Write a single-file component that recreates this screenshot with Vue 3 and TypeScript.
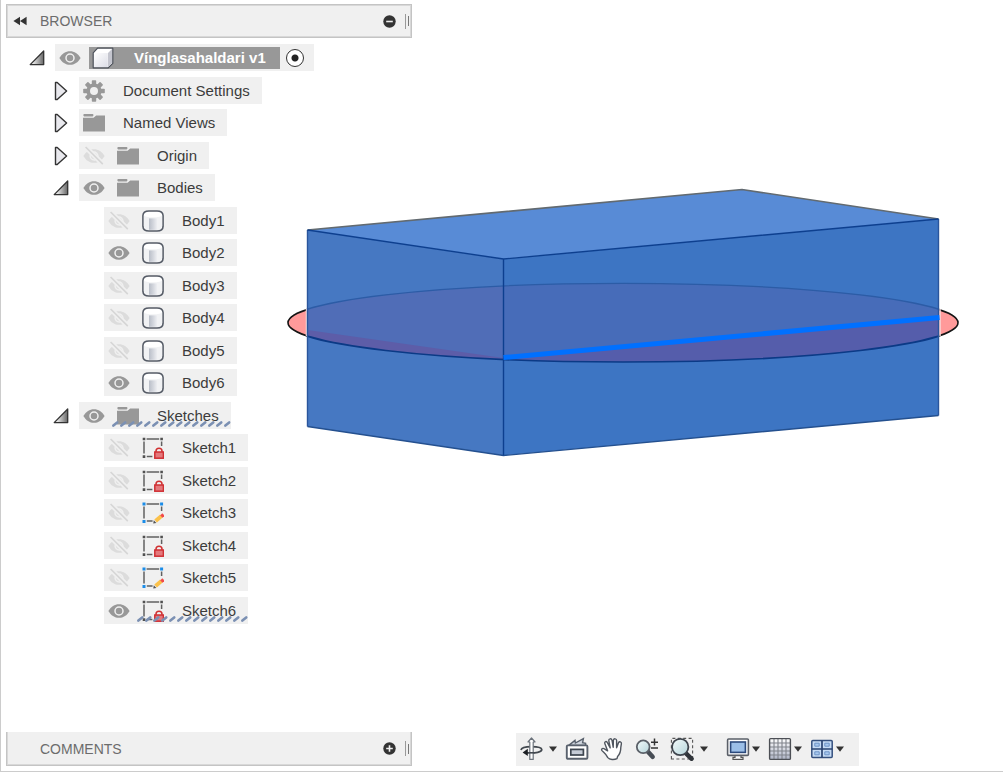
<script setup lang="ts">
import { computed, reactive, ref } from 'vue'

type Kind = 'cube' | 'gear' | 'folder' | 'body' | 'sketch-locked' | 'sketch-edit'

interface TreeNode {
  id: string
  name: string
  kind: Kind
  level: number
  parent?: string
  visible?: boolean
  expanded?: boolean
  marked?: boolean
}

const nodes = reactive<TreeNode[]>([
  { id: 'root', name: 'Vínglasahaldari v1', kind: 'cube', level: 0, visible: true, expanded: true },
  { id: 'settings', name: 'Document Settings', kind: 'gear', level: 1, parent: 'root', expanded: false },
  { id: 'views', name: 'Named Views', kind: 'folder', level: 1, parent: 'root', expanded: false },
  { id: 'origin', name: 'Origin', kind: 'folder', level: 1, parent: 'root', visible: false, expanded: false },
  { id: 'bodies', name: 'Bodies', kind: 'folder', level: 1, parent: 'root', visible: true, expanded: true },
  ...[1, 2, 3, 4, 5, 6].map((n): TreeNode => ({
    id: `body${n}`, name: `Body${n}`, kind: 'body', level: 2, parent: 'bodies', visible: n === 2 || n === 6,
  })),
  { id: 'sketches', name: 'Sketches', kind: 'folder', level: 1, parent: 'root', visible: true, expanded: true, marked: true },
  ...[1, 2, 3, 4, 5, 6].map((n): TreeNode => ({
    id: `sketch${n}`,
    name: `Sketch${n}`,
    kind: n === 3 || n === 5 ? 'sketch-edit' : 'sketch-locked',
    level: 2,
    parent: 'sketches',
    visible: n === 6,
    marked: n === 6,
  })),
])

const treeOpen = ref(true)

function isShown(node: TreeNode): boolean {
  if (!node.parent) return true
  const parent = nodes.find((n) => n.id === node.parent)
  return !!parent && !!parent.expanded && isShown(parent)
}

const rows = computed(() => nodes.filter(isShown))

const tools = [
  { id: 'orbit', label: 'Orbit', menu: true },
  { id: 'lookat', label: 'Look At', menu: false },
  { id: 'pan', label: 'Pan', menu: false },
  { id: 'zoom', label: 'Zoom', menu: false },
  { id: 'fit', label: 'Zoom Window', menu: true },
  { id: 'display', label: 'Display Settings', menu: true },
  { id: 'grid', label: 'Grid and Snaps', menu: true },
  { id: 'viewports', label: 'Viewports', menu: true },
]
</script>

<template>
  <main class="app">
    <svg class="defs" width="0" height="0" aria-hidden="true">
      <defs>
        <linearGradient id="g-tri" x1="0" y1="0" x2="1" y2="0">
          <stop offset="0.2" stop-color="#eee" /><stop offset="1" stop-color="#666" />
        </linearGradient>
        <linearGradient id="g-cyl" x1="0" y1="0" x2="1" y2="0">
          <stop offset="0" stop-color="#b9bec8" /><stop offset="0.5" stop-color="#d3d6dd" />
          <stop offset="1" stop-color="#f0f1f4" />
        </linearGradient>
        <linearGradient id="g-cube" x1="0" y1="0" x2="1" y2="1">
          <stop offset="0" stop-color="#fff" /><stop offset="1" stop-color="#dcdde6" />
        </linearGradient>
        <linearGradient id="g-grid" x1="0" y1="0" x2="0" y2="1">
          <stop offset="0" stop-color="#fff" /><stop offset="1" stop-color="#aeb4c6" />
        </linearGradient>
        <linearGradient id="g-lens" x1="0" y1="0" x2="1" y2="1">
          <stop offset="0" stop-color="#f4fbfb" /><stop offset="1" stop-color="#b5d5da" />
        </linearGradient>
        <pattern id="p-slash" width="8" height="6" patternUnits="userSpaceOnUse">
          <path d="M1.4 4.6L5.2 1.4" stroke="#7b90b3" stroke-width="2.6" stroke-linecap="round" />
        </pattern>
      </defs>

      <symbol id="i-open" viewBox="0 0 16 16">
        <path d="M1.2 14.6L14.7 1V14.6Z" fill="url(#g-tri)" stroke="#333" stroke-width="1.3" stroke-linejoin="round" />
      </symbol>
      <symbol id="i-closed" viewBox="0 0 16 20">
        <path d="M2.5 1.5H4.2L13.6 10L4.2 18.5H2.5Z" fill="#e9e9ee" stroke="#333" stroke-width="1.4" stroke-linejoin="round" />
      </symbol>
      <symbol id="i-eye" viewBox="0 0 22 22">
        <path d="M0.4 11C3 6.4 6.6 4.2 11 4.2S19 6.4 21.6 11C19 15.6 15.4 17.8 11 17.8S3 15.6 0.4 11Z" fill="#989898" />
        <circle cx="11" cy="11" r="4" fill="none" stroke="#f0f0f0" stroke-width="1.5" />
      </symbol>
      <symbol id="i-eye-off" viewBox="0 0 22 22">
        <path d="M0.4 11C3 6.4 6.6 4.2 11 4.2S19 6.4 21.6 11C19 15.6 15.4 17.8 11 17.8S3 15.6 0.4 11Z" fill="#dcdcdc" />
        <path d="M9.6 7.2A4.2 4.2 0 0 1 14.8 12.4M7.2 9.6A4.2 4.2 0 0 0 12.4 14.8" fill="none" stroke="#f0f0f0" stroke-width="1.4" />
        <path d="M3 2.4L20.4 19.8" stroke="#f0f0f0" stroke-width="5" />
        <path d="M2.6 2L19.8 19.2" stroke="#d6d6d6" stroke-width="1.7" />
      </symbol>
      <symbol id="i-cube" viewBox="0 0 22 22">
        <path d="M1.2 5.8L5.6 1.2H20.8V16.4L16.2 20.8H1.2Z" fill="#fff" stroke="#4d525b" stroke-width="1.2" stroke-linejoin="round" />
        <path d="M2 6H15.8V20H2Z" fill="url(#g-cube)" />
        <path d="M16 6L20 2V16L16 20Z" fill="#c4c5ce" />
      </symbol>
      <symbol id="i-gear" viewBox="0 0 22 22">
        <g fill="#989898">
          <rect v-for="a in [0, 45, 90, 135]" :key="a" x="8.8" y="0.2" width="4.4" height="21.6" rx="0.8" :transform="`rotate(${a} 11 11)`" />
          <circle cx="11" cy="11" r="7.6" />
        </g>
        <circle cx="11" cy="11" r="4" fill="#f0f0f0" />
      </symbol>
      <symbol id="i-folder" viewBox="0 0 22 22">
        <rect x="0.4" y="2" width="10" height="2.4" rx="0.8" fill="#989898" />
        <path d="M0 5.8H10.6L13.2 3.4H22V19.6H0Z" fill="#989898" />
      </symbol>
      <symbol id="i-body" viewBox="0 0 22 22">
        <path d="M0.9 5.6Q1.1 0.9 7 0.9H15Q20.9 0.9 21.1 5.6V16.4Q20.9 21.1 15 21.1H7Q1.1 21.1 0.9 16.4Z" fill="#fff" />
        <path d="M2 5.4Q3 7.2 11 7.2T20 5.4V16.4Q19.6 20 15 20H7Q2.4 20 2 16.4Z" fill="#f1f2f4" />
        <path d="M7 8.4H15.4V19.8H7Z" fill="url(#g-cyl)" />
        <path d="M0.9 5.6Q1.1 0.9 7 0.9H15Q20.9 0.9 21.1 5.6V16.4Q20.9 21.1 15 21.1H7Q1.1 21.1 0.9 16.4Z" fill="none" stroke="#555b66" stroke-width="1.5" />
      </symbol>
      <symbol id="i-sketch-locked" viewBox="0 0 22 22">
        <path d="M4.6 2H17.2M2 4.6V16.6M19.6 4.6V9M4.8 19.6H10.4" stroke="#606060" stroke-width="1.5" fill="none" />
        <path d="M0.7 0.7h2.6v2.6h-2.6zM18.3 0.7h2.6v2.6h-2.6zM0.7 18.3h2.6v2.6h-2.6z" fill="#505050" />
        <path d="M14 15.4V14Q14 11.2 17 11.2T20 14V15.4" fill="none" stroke="#d03030" stroke-width="1.5" />
        <rect x="12.8" y="15" width="8.6" height="6.2" fill="#e4797c" stroke="#cf2f33" stroke-width="1.5" />
      </symbol>
      <symbol id="i-sketch-edit" viewBox="0 0 22 22">
        <path d="M4.6 2H17.2M2 4.6V16.6M19.6 4.6V9M4.8 19H10.6" stroke="#606060" stroke-width="1.5" fill="none" />
        <path d="M0.5 0.5h3v3h-3zM18.1 0.5h3v3h-3zM0.5 18.1h3v3h-3z" fill="#1a8ce8" />
        <path d="M13.6 19L19.4 14" stroke="#fbc14a" stroke-width="4" />
        <path d="M11.2 21.4L11.8 18.2L14.4 21Z" fill="#555" />
        <path d="M19.2 12.4L21.6 14.6" stroke="#f04a4a" stroke-width="3" />
      </symbol>

      <symbol id="i-orbit" viewBox="0 0 24 24">
        <path d="M2 13C2.4 10.8 6.6 9.6 12.4 9.6C18.4 9.6 22.6 10.6 22.8 12.6C22.8 15 17.4 16.4 7 15.8" fill="none" stroke="#42484f" stroke-width="1.7" />
        <path d="M12.5 1L16 5H14.2V22.4H10.8V5H9Z" fill="#fff" stroke="#6b727b" stroke-width="1.2" stroke-linejoin="round" />
        <path d="M10 15.8H15.4" stroke="#42484f" stroke-width="1.6" />
        <path d="M3.6 15.4L8.8 11.8V19Z" fill="#1c1f24" />
      </symbol>
      <symbol id="i-lookat" viewBox="0 0 24 24">
        <path d="M3.8 8.4L10 3.4L10.4 6L18.4 1.6L17.6 5.6L20.6 6.2V8.4Z" fill="#cfd5de" stroke="#59616d" stroke-width="1.4" />
        <rect x="1.8" y="8.4" width="20.6" height="13.4" rx="1" fill="#fff" stroke="#59616d" stroke-width="1.9" />
        <rect x="5.8" y="12.4" width="12.6" height="5.6" fill="#c5cbd6" stroke="#3d454f" stroke-width="1.7" />
      </symbol>
      <symbol id="i-pan" viewBox="0 0 24 24">
        <path d="M7.8 20.6C6.2 17 3.6 15.4 1.8 13.4C1 12 2.8 10.8 4.4 11.8L7.6 13.8L4.8 6.6C4.2 4.4 6.6 3.8 7.4 5.6L10.2 10.8L8.8 3.6C8.6 1.4 11.4 1.2 12 3.2L13.2 10.2L13.4 3.2C13.8 1.2 16.6 1.4 16.6 3.6L16.6 10.8L18.6 5.6C19.4 4 21.6 4.8 21.4 6.6L20.8 10.4C20.8 14.4 20 17 17.6 19.4L17 21.6C14.2 23 9.6 22.8 7.8 20.6Z" fill="#fff" stroke="#50565f" stroke-width="1.4" stroke-linejoin="round" />
      </symbol>
      <symbol id="i-zoom" viewBox="0 0 24 24">
        <path d="M13 14.8L17.6 19.8" stroke="#474d55" stroke-width="4.6" stroke-linecap="round" />
        <circle cx="8.2" cy="9.8" r="6.4" fill="url(#g-lens)" stroke="#5a6068" stroke-width="1.8" />
        <path d="M16 5.2H23M19.5 1.6V8.6M16 11H23" stroke="#333" stroke-width="1.5" />
      </symbol>
      <symbol id="i-fit" viewBox="0 0 24 24">
        <path d="M1.4 22V1.4H22.6V22Z" fill="none" stroke="#555" stroke-width="1.1" stroke-dasharray="3 2.4" />
        <path d="M16 16.4L21.6 21.8" stroke="#30343a" stroke-width="4.4" stroke-linecap="round" />
        <circle cx="10.2" cy="10" r="8.2" fill="url(#g-lens)" stroke="#3f454d" stroke-width="1.8" />
      </symbol>
      <symbol id="i-display" viewBox="0 0 24 24">
        <path d="M9 18.4H15V20.4H17V22.4H7V20.4H9Z" fill="#fff" stroke="#555" stroke-width="1.2" />
        <rect x="1.6" y="2" width="20.8" height="16.4" rx="1" fill="#fff" stroke="#5a5f68" stroke-width="1.6" />
        <rect x="4.6" y="5" width="14.8" height="10.4" fill="#9bbfe8" stroke="#2c4a7c" stroke-width="1.6" />
      </symbol>
      <symbol id="i-grid" viewBox="0 0 24 24">
        <rect x="1.6" y="1.6" width="20.8" height="20.8" fill="url(#g-grid)" />
        <path d="M6 1.6V22.4M10 1.6V22.4M14 1.6V22.4M18 1.6V22.4M1.6 6H22.4M1.6 10H22.4M1.6 14H22.4M1.6 18H22.4" stroke="#80848c" stroke-width="1.1" />
        <rect x="1.6" y="1.6" width="20.8" height="20.8" rx="1" fill="none" stroke="#4c4f55" stroke-width="1.4" />
      </symbol>
      <symbol id="i-viewports" viewBox="0 0 24 24">
        <rect x="1.8" y="3.4" width="20.4" height="17.2" rx="1" fill="#c7dcf5" stroke="#35507e" stroke-width="1.5" />
        <path d="M12 3.4V20.6M1.8 12H22.2" stroke="#2a4370" stroke-width="1.7" />
        <path d="M4.8 6.2H9.2V9.2H4.8ZM14.8 6.2H19.2V9.2H14.8ZM4.8 14.8H9.2V17.8H4.8ZM14.8 14.8H19.2V17.8H14.8Z" fill="#a8c9ef" stroke="#6d93c6" stroke-width="1" />
      </symbol>
    </svg>

    <svg class="scene" viewBox="1 0 1002 771" role="img" aria-label="Body with sketch profile">
      <defs>
        <clipPath id="c-disc"><ellipse cx="623" cy="322.7" rx="335.5" ry="39.3" /></clipPath>
        <clipPath id="c-box"><path d="M307.5 230L742 189.5L938.5 219V415.5L503.5 455.5L307.5 426.5Z" /></clipPath>
      </defs>
      <ellipse cx="623" cy="322.7" rx="335" ry="39" fill="#ff9a9a" stroke="#151515" stroke-width="1.6" />
      <path d="M306.5 309V336M940 309V336" stroke="#f6dcdc" stroke-width="1.5" />
      <path d="M307.5 230L742 189.5L938.5 219L503.5 259Z" fill="#588bd6" />
      <path d="M307.5 230L503.5 259V455.5L307.5 426.5Z" fill="#4678c2" />
      <path d="M503.5 259L938.5 219V415.5L503.5 455.5Z" fill="#3d75c3" />
      <g clip-path="url(#c-disc)">
        <path d="M307.5 270H503.5V370H307.5Z" fill="#506db7" />
        <path d="M503.5 270H938.5V370H503.5Z" fill="#476cb9" />
        <path d="M307.5 330L503.5 358V370H307.5Z" fill="#5d5da8" />
        <path d="M503.5 358L938.5 318V370H503.5Z" fill="#555dab" />
      </g>
      <g clip-path="url(#c-box)" fill="none">
        <path d="M287.5 322.7A335.5 39.3 0 0 1 958.5 322.7" stroke="#2c5ca6" stroke-width="1.2" />
        <path d="M287.5 322.7A335.5 39.3 0 0 0 958.5 322.7" stroke="#0b3a86" stroke-width="1.7" />
      </g>
      <g fill="none" stroke-width="1.4">
        <path d="M307.5 230L742 189.5L938.5 219" stroke="#626a70" stroke-width="1.7" />
        <path d="M307.5 426.5L503.5 455.5L938.5 415.5" stroke="#24508f" />
        <path d="M307.5 230V426.5M938.5 219V415.5" stroke="#2a559c" />
        <path d="M307.5 230L503.5 259L938.5 219M503.5 259V455.5" stroke="#0d3f8f" />
      </g>
      <path d="M503.5 357.6L939.5 317.6" stroke="#0070ff" stroke-width="5" />
    </svg>

    <div class="overlay">
      <header class="panel">
        <button class="collapse" type="button" aria-label="Collapse browser">
          <svg width="14" height="10" viewBox="0 0 14 10"><path d="M7 0.8V9.2L0.4 5ZM13.6 0.8V9.2L7 5Z" fill="#333" /></svg>
        </button>
        <h2 class="title">BROWSER</h2>
        <button class="round" type="button" aria-label="Toggle browser tree" @click="treeOpen = !treeOpen">
          <svg width="13" height="13" viewBox="0 0 13 13"><circle cx="6.5" cy="6.5" r="6.2" fill="#333" /><path d="M3.2 6.5H9.8" stroke="#f0f0f0" stroke-width="1.6" /></svg>
        </button>
        <span class="grip"></span>
      </header>

      <ul v-if="treeOpen" class="tree">
        <li v-for="node in rows" :key="node.id" class="row" :class="`level-${node.level}`">
          <button
            v-if="node.expanded !== undefined"
            class="twisty"
            type="button"
            :aria-expanded="node.expanded"
            :aria-label="`Toggle ${node.name}`"
            @click="node.expanded = !node.expanded"
          >
            <svg v-if="node.expanded" width="16" height="16"><use href="#i-open" /></svg>
            <svg v-else width="16" height="20"><use href="#i-closed" /></svg>
          </button>
          <span v-else class="twisty"></span>
          <div class="item">
            <button
              v-if="node.visible !== undefined"
              class="eye"
              type="button"
              :aria-pressed="node.visible"
              :aria-label="`Show ${node.name}`"
              @click="node.visible = !node.visible"
            >
              <svg width="22" height="22"><use :href="node.visible ? '#i-eye' : '#i-eye-off'" /></svg>
            </button>
            <button class="name" :class="{ root: node.level === 0 }" type="button">
              <svg width="22" height="22"><use :href="`#i-${node.kind}`" /></svg>
              <span>{{ node.name }}</span>
            </button>
            <input v-if="node.level === 0" class="active" type="radio" name="active-component" checked :aria-label="`Activate ${node.name}`" />
            <svg v-if="node.marked" class="slashes" aria-hidden="true"><rect width="100%" height="6" fill="url(#p-slash)" /></svg>
          </div>
        </li>
      </ul>

      <footer class="bottom">
        <section class="panel comments">
          <h2 class="title">COMMENTS</h2>
          <button class="round" type="button" aria-label="Add comment">
            <svg width="13" height="13" viewBox="0 0 13 13"><circle cx="6.5" cy="6.5" r="6.2" fill="#333" /><path d="M3.2 6.5H9.8M6.5 3.2V9.8" stroke="#f0f0f0" stroke-width="1.6" /></svg>
          </button>
          <span class="grip"></span>
        </section>
        <nav class="toolbar" aria-label="Navigation">
          <div v-for="tool in tools" :key="tool.id" class="tool" :class="[tool.id, { menu: tool.menu }]">
            <button type="button" :aria-label="tool.label">
              <svg width="24" height="24"><use :href="`#i-${tool.id}`" /></svg>
            </button>
            <button v-if="tool.menu" class="caret" type="button" :aria-label="`${tool.label} options`">
              <svg width="8" height="6" viewBox="0 0 8 6"><path d="M0 0.4H8L4 5.8Z" fill="#333" /></svg>
            </button>
          </div>
        </nav>
      </footer>
    </div>
  </main>
</template>

<style>
body {
  margin: 0;
  background: #fff;
}
</style>

<style scoped>
.app {
  display: grid;
  box-sizing: border-box;
  min-height: 100vh;
  border-left: 1px solid #ccc;
  border-bottom: 1px solid #ccc;
  font-family: "Liberation Sans", Arial, sans-serif;
  color: #3c3c3c;
}
.defs {
  position: absolute;
}
.scene,
.overlay {
  grid-area: 1 / 1;
}
.scene {
  display: block;
  width: 100%;
  height: auto;
}
.overlay {
  display: flex;
  flex-direction: column;
  padding: 4px 5px 5px;
}
button {
  display: flex;
  align-items: center;
  justify-content: center;
  padding: 0;
  border: 0;
  background: none;
  font: inherit;
  color: inherit;
  cursor: pointer;
}
svg {
  display: block;
  flex: none;
}
.panel {
  display: flex;
  align-items: center;
  box-sizing: border-box;
  width: 406px;
  max-width: 100%;
  height: 34px;
  padding: 0 2px 0 6px;
  border: 1px solid #c4c4c4;
  box-shadow: inset -1px -1px 0 #d8d8d8, inset 1px 1px 0 #d8d8d8;
  background: #f0f0f0;
}
.collapse {
  width: 14px;
}
.title {
  flex: 1;
  margin: 0 0 0 13px;
  font-size: 14px;
  font-weight: 400;
  line-height: 20px;
  color: #6c6c6c;
}
.round {
  margin-right: 9px;
}
.grip {
  box-sizing: border-box;
  width: 4px;
  height: 15px;
  border-left: 1px solid #999;
  background: linear-gradient(#777, #777) right center / 1px 10px no-repeat;
}
.tree {
  margin: 0;
  padding: 6px 0 0 23px;
  list-style: none;
}
.row {
  display: flex;
  align-items: center;
  height: 27px;
  margin-bottom: 5px;
}
.row:nth-child(odd) {
  margin-bottom: 6px;
}
.level-1 {
  padding-left: 24px;
}
.level-2 {
  padding-left: 49px;
}
.twisty {
  flex: none;
  width: 16px;
  margin-right: 10px;
}
.item {
  position: relative;
  display: flex;
  align-items: center;
  height: 27px;
  padding: 0 12px 0 4px;
  background: #f0f0f0;
}
.eye {
  margin-right: 12px;
}
.name {
  gap: 18px;
  font-size: 15px;
  line-height: 20px;
  white-space: nowrap;
}
.name.root {
  gap: 20px;
  height: 22px;
  margin-left: -4px;
  padding: 0 14px 0 3px;
  background: #989898;
  color: #fff;
  font-weight: 700;
}
.active {
  appearance: none;
  width: 18px;
  height: 18px;
  margin: 0 -2px 0 6px;
  border: 1px solid #333;
  border-radius: 50%;
  background: radial-gradient(circle, #222 3px, #fff 4px);
  outline: 0;
}
.slashes {
  position: absolute;
  right: 0;
  bottom: 2px;
  left: 33px;
  width: calc(100% - 33px);
  height: 6px;
}
.bottom {
  display: flex;
  flex-wrap: wrap;
  align-items: center;
  gap: 104px;
  margin-top: auto;
}
.comments {
  padding-left: 20px;
  border-top: 0;
  box-shadow: inset -1px -1px 0 #d8d8d8, inset 1px 0 0 #d8d8d8;
}
.toolbar {
  display: flex;
  align-items: center;
  height: 33px;
  padding: 0 15px 0 3px;
  background: #f0f0f0;
}
.tool {
  display: flex;
  align-items: center;
  margin-right: 11px;
}
.tool:last-child {
  margin-right: 0;
}
.caret {
  margin-left: 2px;
}
.orbit,
.display,
.grid {
  margin-right: 8px;
}
.orbit .caret,
.fit .caret {
  margin-left: 6px;
}
.fit {
  margin-right: 18px;
}
</style>
